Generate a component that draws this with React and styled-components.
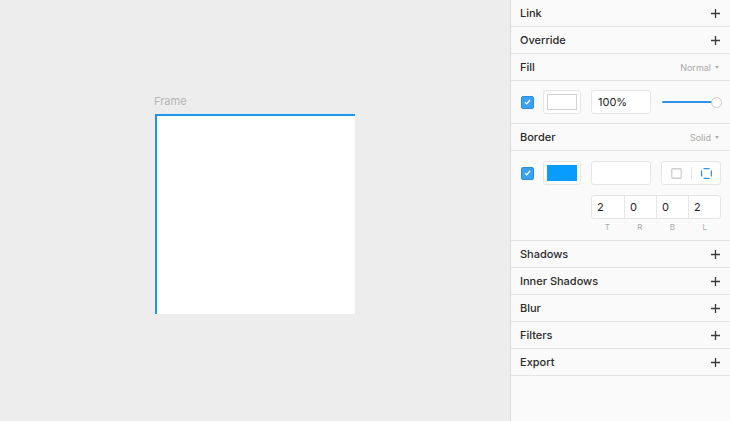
import React from "react";
import styled, { createGlobalStyle } from "styled-components";

const Global = createGlobalStyle`
  html, body { margin: 0; padding: 0; }
  body { font-family: Inter, "Helvetica Neue", "Liberation Sans", sans-serif; -webkit-font-smoothing: antialiased; }
`;

const Page = styled.div`
  display: flex;
  width: 730px;
  height: 421px;
  overflow: hidden;
  background: #ededed;
`;

const Canvas = styled.div`
  flex: 1;
  padding: 94px 0 0 154px;
  display: flex;
  flex-direction: column;
  align-items: flex-start;
`;

const FrameLabel = styled.div`
  font-size: 11px;
  line-height: 14px;
  color: #b4b4b4;
  margin-bottom: 6px;
`;

const FrameBox = styled.div`
  margin-left: 1px;
  width: 198px;
  height: 198px;
  background: #fff;
  border-top: 2px solid #1f94e8;
  border-left: 2px solid #1f94e8;
`;

const Panel = styled.div`
  width: 219px;
  flex: none;
  border-left: 1px solid #dadada;
  background: #fafafa;
  display: flex;
  flex-direction: column;
`;

const Header = styled.div`
  height: 26px;
  border-bottom: 1px solid #e4e4e4;
  display: flex;
  align-items: center;
  justify-content: space-between;
  padding: 0 10px 0 9px;
  font-size: 11px;
  font-weight: 500;
  color: #2b2b2b;
  & > span:first-child { margin-top: -1px; }
`;

const Mode = styled.span`
  font-size: 9px;
  font-weight: 400;
  color: #a9a9a9;
  display: flex;
  align-items: center;
  gap: 4px;
  margin-right: 1px;
`;

const Caret = styled.span`
  width: 0;
  height: 0;
  border-left: 2.5px solid transparent;
  border-right: 2.5px solid transparent;
  border-top: 3px solid #b0b0b0;
`;

const Content = styled.div`
  border-bottom: 1px solid #e4e4e4;
  padding: ${(p) => p.$pad || "9px 9px 9px 10px"};
  display: grid;
  grid-template-columns: 12px 38px 60px 60px;
  column-gap: 10px;
  row-gap: 10px;
  align-items: center;
`;

const Check = styled.div`
  width: 11px;
  height: 11px;
  border-radius: 2px;
  background: #3ba1f3;
  border: 0.5px solid #2a8ddc;
  display: flex;
  align-items: center;
  justify-content: center;
`;

const Well = styled.div`
  height: 24px;
  box-sizing: border-box;
  border: 1px solid #e6e6e6;
  border-radius: 3px;
  background: #fff;
  display: flex;
  align-items: center;
  justify-content: center;
`;

const Swatch = styled.div`
  width: 30px;
  height: 16px;
  box-sizing: border-box;
  background: ${(p) => p.$color};
  border: 1px solid ${(p) => (p.$color === "#fff" ? "#d2d2d2" : p.$color)};
`;

const Input = styled.div`
  height: 24px;
  box-sizing: border-box;
  border: 1px solid #e6e6e6;
  border-radius: 3px;
  background: #fff;
  font-size: 11px;
  color: #222;
  display: flex;
  align-items: center;
  padding-left: 6px;
`;

const Slider = styled.div`
  position: relative;
  height: 24px;
  display: flex;
  align-items: center;
`;

const Track = styled.div`
  margin-left: 1px;
  width: 54px;
  height: 2px;
  background: #2f92e4;
  border-radius: 1px;
`;

const Knob = styled.div`
  position: absolute;
  left: 50px;
  top: 7px;
  width: 9px;
  height: 9px;
  border-radius: 50%;
  background: #fff;
  border: 1px solid #c8c8c8;
`;

const Segmented = styled(Well)`
  justify-content: space-around;
  padding: 0 4px;
`;

const Divider = styled.div`
  width: 1px;
  height: 12px;
  background: #e6e6e6;
`;

const Sides = styled.div`
  grid-column: 3 / 5;
  display: grid;
  grid-template-columns: repeat(4, 1fr);
  height: 24px;
  box-sizing: border-box;
  border: 1px solid #e6e6e6;
  border-radius: 3px;
  background: #fff;
`;

const Side = styled.div`
  display: flex;
  align-items: center;
  padding-left: 5px;
  font-size: 11px;
  color: #222;
  & + & { border-left: 1px solid #e6e6e6; }
`;

const SideLabels = styled.div`
  grid-column: 3 / 5;
  display: grid;
  grid-template-columns: repeat(4, 1fr);
  margin-top: -7px;
  font-size: 8px;
  line-height: 10px;
  color: #ababab;
  text-align: center;
`;

const Plus = () => (
  <svg width="9" height="9" viewBox="0 0 9 9">
    <path d="M4.5 0v9M0 4.5h9" stroke="#3a3a3a" strokeWidth="1.3" />
  </svg>
);

const Tick = () => (
  <svg width="7" height="6" viewBox="0 0 7 6">
    <path d="M1 3.2l1.7 1.6L6 1" fill="none" stroke="#fff" strokeWidth="1.2" />
  </svg>
);

const Row = ({ title, children }) => (
  <Header>
    <span>{title}</span>
    {children === undefined ? <Plus /> : children}
  </Header>
);

export default function App() {
  return (
    <Page>
      <Global />
      <Canvas>
        <FrameLabel>Frame</FrameLabel>
        <FrameBox />
      </Canvas>
      <Panel>
        <Row title="Link" />
        <Row title="Override" />
        <Row title="Fill">
          <Mode>Normal <Caret /></Mode>
        </Row>
        <Content>
          <Check><Tick /></Check>
          <Well><Swatch $color="#fff" /></Well>
          <Input>100%</Input>
          <Slider>
            <Track />
            <Knob />
          </Slider>
        </Content>
        <Row title="Border">
          <Mode>Solid <Caret /></Mode>
        </Row>
        <Content $pad="10px 9px 8px 10px">
          <Check><Tick /></Check>
          <Well><Swatch $color="#0a9bff" /></Well>
          <Input />
          <Segmented>
            <svg width="11" height="11" viewBox="0 0 11 11">
              <rect x="0.75" y="0.75" width="9.5" height="9.5" rx="1" fill="none" stroke="#cfcfcf" strokeWidth="1.3" />
            </svg>
            <Divider />
            <svg width="11" height="11" viewBox="0 0 11 11">
              <path d="M2.5 0.6H8.5M2.5 10.4H8.5M0.6 2.5V8.5M10.4 2.5V8.5" fill="none" stroke="#2a95e6" strokeWidth="1.2" />
            </svg>
          </Segmented>
          <Sides>
            <Side>2</Side>
            <Side>0</Side>
            <Side>0</Side>
            <Side>2</Side>
          </Sides>
          <SideLabels>
            <span>T</span>
            <span>R</span>
            <span>B</span>
            <span>L</span>
          </SideLabels>
        </Content>
        <Row title="Shadows" />
        <Row title="Inner Shadows" />
        <Row title="Blur" />
        <Row title="Filters" />
        <Row title="Export" />
      </Panel>
    </Page>
  );
}
